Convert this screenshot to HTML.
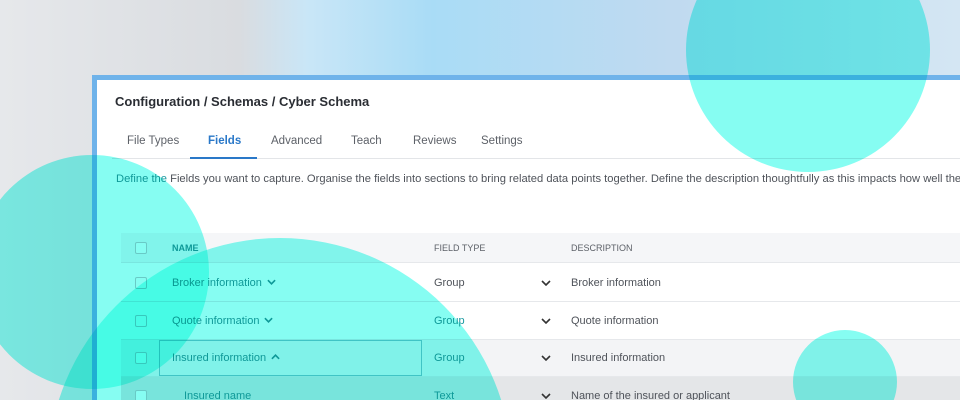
<!DOCTYPE html>
<html style="width:960px;height:400px;overflow:hidden"><head><style>
*{margin:0;padding:0;box-sizing:border-box}
body{width:960px;height:400px;overflow:hidden;position:relative;font-family:"Liberation Sans",sans-serif;
background:linear-gradient(90deg,#e6e8eb 0%,#d9dce0 25%,#c9e6f7 32%,#a9dcf6 45%,#c0daf0 70%,#d4e6f3 100%)}
.wrap{position:absolute;left:0;top:0;width:960px;height:400px;overflow:hidden}
.panel{position:absolute;left:92px;top:75px;width:868px;height:325px;background:#fff;border-left:5px solid #6fb3ea;border-top:5px solid #6fb3ea;overflow:hidden}
.t{position:absolute;white-space:nowrap}
.title{left:18px;top:14px;font-size:13px;font-weight:bold;color:#2a2d33}
.tab{top:55px;font-size:11.5px;color:#5d6168}
.row{position:absolute;left:24px;width:860px;border-bottom:1px solid #e6e8eb}
.cb{position:absolute;left:14px;width:12px;height:12px;border:1px solid #c8ccd1;border-radius:2px;background:#fff}
.cell{position:absolute;font-size:11px;color:#4f535a;white-space:nowrap}
.nm{left:51px;color:#1a9aa0}
.ft{left:313px}
.ds{left:450px}
.chev{position:absolute;left:420px;width:10px;height:6px}
.ic{display:inline-block;width:9px;height:6px;margin-left:5px;vertical-align:1px}
.circ{position:absolute;border-radius:50%;background:#86fdf2;mix-blend-mode:multiply}
</style></head><body>
<div class="wrap">
<div class="panel">
<div class="t title">Configuration / Schemas / Cyber Schema</div>
<div class="t tab" style="left:30px">File Types</div>
<div class="t tab" style="left:111px;color:#2a78c8;font-weight:bold">Fields</div>
<div class="t tab" style="left:174px">Advanced</div>
<div class="t tab" style="left:254px">Teach</div>
<div class="t tab" style="left:316px">Reviews</div>
<div class="t tab" style="left:384px">Settings</div>
<div style="position:absolute;left:15px;top:78px;width:870px;height:1px;background:#e3e5e8"></div>
<div style="position:absolute;left:93px;top:77px;width:67px;height:2px;background:#2a78c8"></div>
<div class="t" style="left:19px;top:93px;font-size:11.2px;color:#4f535a"><span style="color:#1a9aa0">Define the</span> Fields you want to capture. Organise the fields into sections to bring related data points together. Define the description thoughtfully as this impacts how well the</div>

<div class="row" style="top:153px;height:30px;background:#f5f6f8">
<div class="cb" style="top:9px"></div>
<div class="cell nm" style="top:10px;font-size:9px;font-weight:bold">NAME</div>
<div class="cell ft" style="top:10px;font-size:9px;color:#5d6168">FIELD TYPE</div>
<div class="cell ds" style="top:10px;font-size:9px;color:#5d6168">DESCRIPTION</div>
</div>
<div class="row" style="top:184px;height:38px">
<div class="cb" style="top:13px"></div>
<div class="cell nm" style="top:13px">Broker information<svg class="ic" viewBox="0 0 10 6"><path d="M1 1l4 4 4-4" fill="none" stroke="#1a9aa0" stroke-width="1.8"/></svg></div>
<div class="cell ft" style="top:13px">Group</div>
<svg class="chev" style="top:16px" viewBox="0 0 10 6"><path d="M1 1l4 4 4-4" fill="none" stroke="#333" stroke-width="1.6"/></svg>
<div class="cell ds" style="top:13px">Broker information</div>
</div>
<div class="row" style="top:222px;height:38px">
<div class="cb" style="top:13px"></div>
<div class="cell nm" style="top:13px">Quote information<svg class="ic" viewBox="0 0 10 6"><path d="M1 1l4 4 4-4" fill="none" stroke="#1a9aa0" stroke-width="1.8"/></svg></div>
<div class="cell ft" style="top:13px;color:#1a9aa0">Group</div>
<svg class="chev" style="top:16px" viewBox="0 0 10 6"><path d="M1 1l4 4 4-4" fill="none" stroke="#333" stroke-width="1.6"/></svg>
<div class="cell ds" style="top:13px">Quote information</div>
</div>
<div class="row" style="top:260px;height:37px;background:#f3f4f6">
<div class="cb" style="top:12px"></div>
<div style="position:absolute;left:38px;top:0;width:263px;height:36px;border:1px solid #7ac6d0"></div>
<div class="cell nm" style="top:12px">Insured information<svg class="ic" viewBox="0 0 10 6"><path d="M1 5l4-4 4 4" fill="none" stroke="#1a9aa0" stroke-width="1.8"/></svg></div>
<div class="cell ft" style="top:12px;color:#1a9aa0">Group</div>
<svg class="chev" style="top:15px" viewBox="0 0 10 6"><path d="M1 1l4 4 4-4" fill="none" stroke="#333" stroke-width="1.6"/></svg>
<div class="cell ds" style="top:12px">Insured information</div>
</div>
<div class="row" style="top:297px;height:28px;background:#e4e6e8;border-bottom:none">
<div class="cb" style="top:13px"></div>
<div class="cell nm" style="top:13px;left:63px">Insured name</div>
<div class="cell ft" style="top:13px;color:#1a9aa0">Text</div>
<svg class="chev" style="top:16px" viewBox="0 0 10 6"><path d="M1 1l4 4 4-4" fill="none" stroke="#333" stroke-width="1.6"/></svg>
<div class="cell ds" style="top:13px">Name of the insured or applicant</div>
</div>
</div>
<div class="circ" style="left:686px;top:-72px;width:244px;height:244px"></div>
<div class="circ" style="left:-25px;top:155px;width:234px;height:234px"></div>
<div class="circ" style="left:48px;top:238px;width:464px;height:464px"></div>
<div class="circ" style="left:793px;top:330px;width:104px;height:104px"></div>
</div>
</body></html>
